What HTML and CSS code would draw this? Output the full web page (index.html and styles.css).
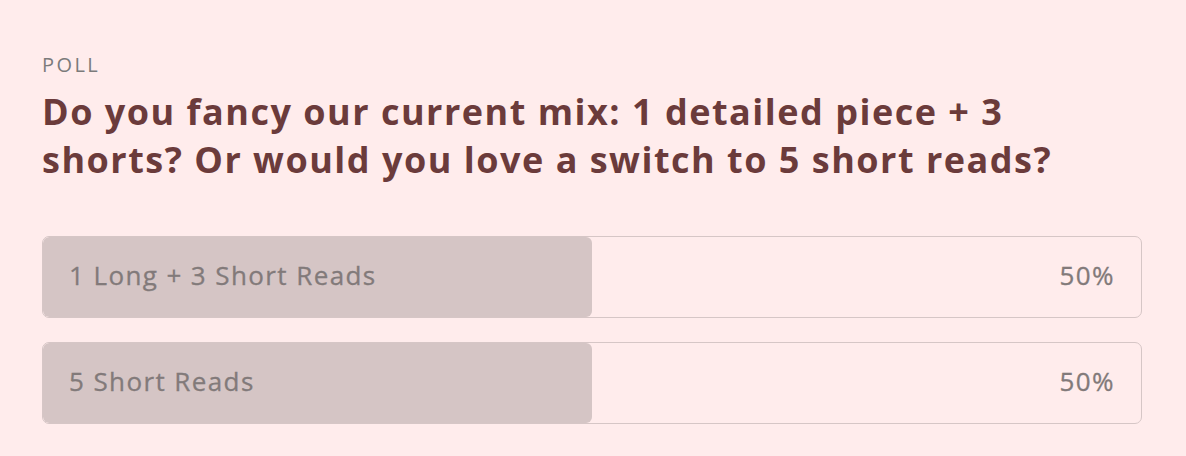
FILE: index.html
```html
<!doctype html>
<html>
<head>
<meta charset="utf-8">
<title>Poll</title>
<link rel="stylesheet" href="styles.css">
</head>
<body>

<div class="poll">
<div class="label">POLL</div>
<h2 class="question">Do you fancy our current mix: 1 detailed piece + 3 shorts? Or would you love a switch to 5 short reads?</h2>

<div class="options">
<div class="option">
<div class="fill" style="width: 50%;"></div>
<span class="text">1 Long + 3 Short Reads</span>
<span class="pct">50%</span>
</div>
<div class="option">
<div class="fill" style="width: 50%;"></div>
<span class="text">5 Short Reads</span>
<span class="pct">50%</span>
</div>
</div>
</div>

</body>
</html>
```

FILE: styles.css
```css
body {margin: 0; background: #ffecec; font-family: "Open Sans", sans-serif;}
.poll {padding: 52px 44px 0 42px;}
.label {font-size: 20px; letter-spacing: 2.4px; color: #7b7b7b; line-height: 26px;}
.question {margin: 10px 0 0; font-size: 36px; letter-spacing: 1.5px; line-height: 48px; font-weight: 700; color: #6b3b3b; max-width: 1070px;}
.options {margin-top: 52px; display: flex; flex-direction: column; gap: 24px;}
.option {position: relative; height: 76px; border: 1px solid #d6c6c6; border-radius: 7px; display: flex; align-items: center; justify-content: space-between; padding: 0 26px 4px; overflow: hidden;}
.fill {position: absolute; left: 0; top: 0; bottom: 0; background: #d5c5c5; border-radius: 6px;}
.text, .pct {position: relative; font-size: 26px; letter-spacing: 1.4px; color: #827a7a; -webkit-text-stroke: 0.3px #827a7a;}
```
